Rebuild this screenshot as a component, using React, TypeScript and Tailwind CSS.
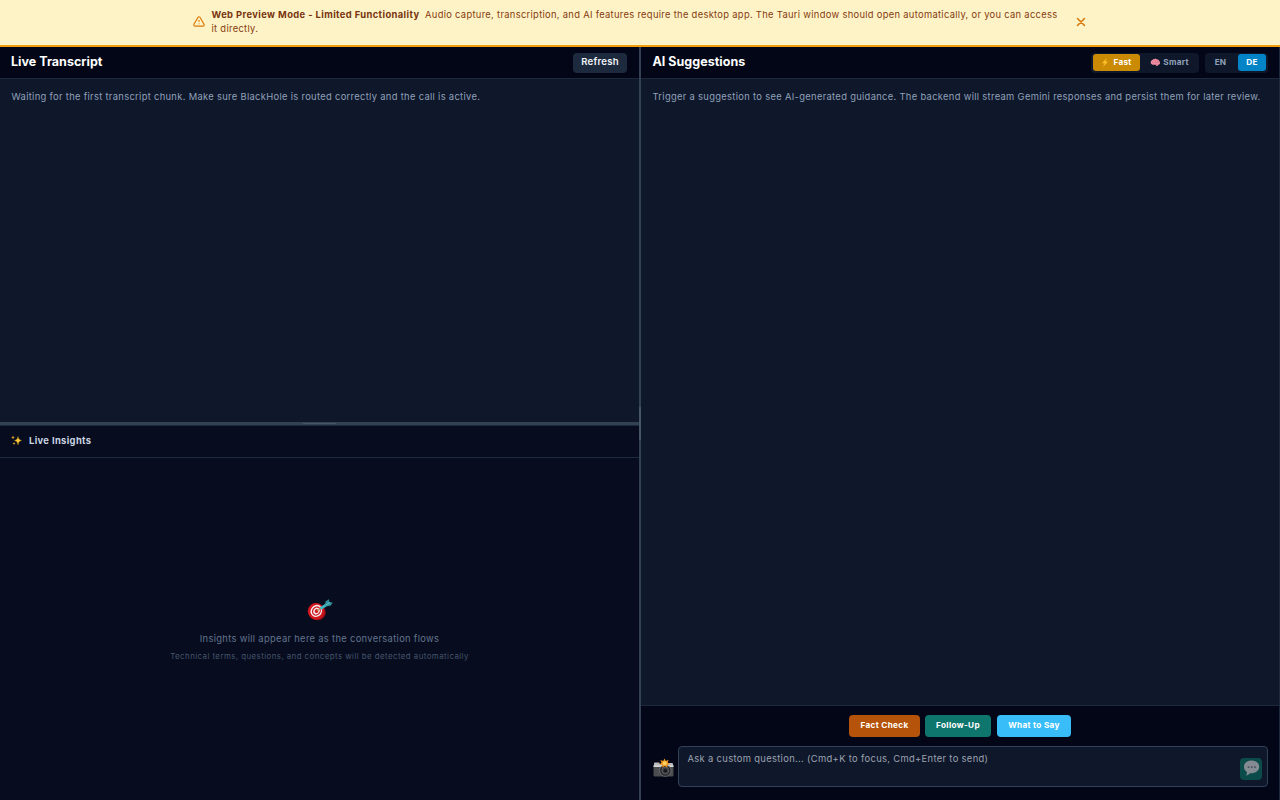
import type { ReactNode } from "react";

function Warning() {
  return (
    <svg className="-ml-px size-[14px] shrink-0 text-[#dc7b0a]" viewBox="0 0 24 24" fill="none" stroke="currentColor" strokeWidth="2" strokeLinecap="round" strokeLinejoin="round">
      <path d="M12 9v2m0 4h.01m-6.938 4h13.856c1.54 0 2.502-1.667 1.732-3L13.732 4c-.77-1.333-2.694-1.333-3.464 0L3.34 16c-.77 1.333.192 3 1.732 3z" />
    </svg>
  );
}

function Close() {
  return (
    <svg className="size-[14px]" viewBox="0 0 24 24" fill="none" stroke="currentColor" strokeWidth="2.6" strokeLinecap="round">
      <path d="M6 18L18 6M6 6l12 12" />
    </svg>
  );
}

function Sparkles() {
  return (
    <svg className="-mt-px h-[11px] w-[11px]" viewBox="0 0 22 22">
      <path d="M14 3Q14.8 10.2 21 11Q14.8 11.8 14 20Q13.2 11.8 7 11Q13.2 10.2 14 3Z" fill="#fcc934" stroke="#e8a51c" strokeWidth=".6" />
      <path d="M4 1Q4.4 4.6 8 5Q4.4 5.4 4 9Q3.6 5.4 0 5Q3.6 4.6 4 1ZM6 14Q6.4 16.7 9 17Q6.4 17.3 6 20Q5.6 17.3 3 17Q5.6 16.7 6 14Z" fill="#dfa02a" />
    </svg>
  );
}

function Bolt() {
  return (
    <svg className="h-[9px] w-[8px]" viewBox="0 0 16 18">
      <path d="M11 1L2 10.5L7.5 9.8L4.5 17L14 7.2L8.5 7.8Z" fill="#ffcf2e" stroke="#f6a623" strokeWidth=".8" />
    </svg>
  );
}

function Brain() {
  return (
    <svg className="h-[9px] w-[10.5px]" viewBox="0 0 22 18">
      <path d="M1.5 10C1 6 3 4 5.500 3C8 .8 12 .8 14 2C18 2.300 20 5 20.500 8C22 11 20 14 17 14L15.500 16.500C13 16 12.500 14 11 13.500C8 14.500 3 14 1.500 10Z" fill="#f090a4" />
      <path d="M4 9C6 7 8 8 9 10M8 4C10 4 11 6 13 5M12 10C14 7 17 7 18 10M11 12C13 12 14 14 16 13M15 5C16 4 17 5 17 7" fill="none" stroke="#c5526e" strokeWidth="1" />
    </svg>
  );
}

function Target() {
  return (
    <svg className="h-[22px] w-[26px]" viewBox="0 0 26 22">
      <ellipse cx="10.2" cy="13.3" rx="8.6" ry="8" fill="#9d1017" />
      <ellipse cx="9" cy="12.2" rx="8.2" ry="8.2" fill="#d5161f" />
      <g transform="rotate(35 9.4 12)">
        <ellipse cx="9.3" cy="12" rx="5.6" ry="6.3" fill="#f5eeee" />
        <ellipse cx="9.4" cy="12" rx="4.3" ry="4.9" fill="#d0202a" />
        <ellipse cx="9.5" cy="12" rx="3" ry="3.5" fill="#f5eeee" />
        <ellipse cx="9.6" cy="12" rx="1.8" ry="2.1" fill="#cf202a" />
      </g>
      <path d="M10 11.7L15 8.4" stroke="#b99a45" strokeWidth="1" />
      <path d="M13.5 9.6L20.5 5" stroke="#3db8c4" strokeWidth="2.8" />
      <path d="M18.2 6.6L18.4 2.4L22 .3L22.3 3L25.8 3.8L23.4 6.8L19.5 7.2Z" fill="#338f9c" />
      <path d="M19 5.8L23 3.6" stroke="#73d2d8" strokeWidth=".8" />
    </svg>
  );
}

function Camera() {
  return (
    <svg className="h-[20px] w-[21px]" viewBox="0 0 21 20">
      <path d="M1 5.3Q1 4.5 2 4.5H6L7 6H15L16 5H19Q20 5 20 6V10H1Z" fill="#b8babb" />
      <path d="M.5 8H20.5V17Q20.5 18.5 19 18.5H2Q.5 18.5 .5 17Z" fill="#4b4d4f" />
      <path d="M.5 7.2H20.5V9H.5Z" fill="#d3d4d5" />
      <circle cx="12.3" cy="12.6" r="5.7" fill="#242628" stroke="#8a8c8d" strokeWidth=".6" />
      <circle cx="12.3" cy="12.6" r="3.5" fill="#3a3d40" stroke="#77797b" strokeWidth=".6" />
      <circle cx="12.3" cy="12.8" r="1.7" fill="#16191b" />
      <path d="M11.5 .5L12.8 3L15.6 1.8L14.7 4.4L17 6L14.3 6.7L14.5 9.4L11.8 8L9.4 9.6L9.3 7L6.2 6.4L8.5 4.8L7.4 2L10.2 3.1Z" fill="#ef9320" />
      <circle cx="11.7" cy="5.2" r="2" fill="#ffd45c" />
    </svg>
  );
}

function Speech() {
  return (
    <svg className="-mt-px h-[17px] w-[17px]" viewBox="0 0 17 17">
      <path d="M8.5 .5C4 .5 1 3 1 6.800C1 9.100 2.100 10.900 4 12C4.100 13.500 3.400 14.800 2.600 15.500C4.500 15.500 6.200 14.500 7 13.300C12.500 13.500 16.200 10.800 16.200 6.800C16.200 3 13 .5 8.500 .5Z" fill="#858b93" />
      <path d="M4.700 6.300h1.600v1.600h-1.600ZM7.900 6.300h1.600v1.600h-1.600ZM11.100 6.300h1.600v1.600h-1.600Z" fill="#4a5260" />
    </svg>
  );
}

function Title({ children }: { children: ReactNode }) {
  return <h2 className="pb-[2px] text-[12.5px] leading-[18px] font-bold tracking-[0.02px] text-white">{children}</h2>;
}

export default function App() {
  return (
    <div className="flex h-screen flex-col overflow-hidden bg-[#020617] font-['Inter',sans-serif] whitespace-nowrap">
      <div className="flex h-[47px] shrink-0 justify-center border-b-2 border-[#f59e0b] bg-[#fef3c7] text-[#78350f]">
        <div className="flex w-[895px] items-center pb-[2px]">
          <Warning />
          <p className="ml-[6px] w-[850px] text-[9.4px] leading-[14px] tracking-[0.3px] text-[#853b0f]">
            <strong className="mr-[5.5px] font-bold tracking-[0.39px] text-[#78350f]">Web Preview Mode - Limited Functionality</strong>
            Audio capture, transcription, and AI features require the desktop app. The Tauri window should open automatically, or you can access
            <br />
            it directly.
          </p>
          <button className="ml-[12px] text-[#d97706]"><Close /></button>
        </div>
      </div>

      <main className="flex min-h-0 flex-1">
        <div className="flex w-[639px] flex-col">
          <header className="flex h-8 shrink-0 items-center justify-between border-b border-slate-800 pr-3 pl-[11px]">
            <Title>Live Transcript</Title>
            <button className="h-5 w-[54px] rounded-[4px] bg-slate-800 pb-px text-[9.6px] font-semibold tracking-[0.25px] text-slate-100">Refresh</button>
          </header>
          <section className="h-[343px] shrink-0 bg-slate-900 px-[11.5px] pt-[11px]">
            <p className="text-[9.4px] leading-[14px] tracking-[0.31px] text-slate-400">Waiting for the first transcript chunk. Make sure BlackHole is routed correctly and the call is active.</p>
          </section>
          <div className="flex h-[3px] shrink-0 items-center justify-center bg-[#334155]">
            <div className="h-px w-[33px] bg-[#475569]" />
          </div>
          <section className="flex min-h-0 flex-1 flex-col border-t border-slate-800 bg-[#070c1e]">
            <header className="flex h-8 shrink-0 items-center gap-[7px] border-b border-slate-800 pb-px pl-[11px]">
              <Sparkles />
              <h3 className="pt-px text-[9.4px] font-bold tracking-[0.36px] text-slate-300">Live Insights</h3>
            </header>
            <div className="flex flex-1 flex-col items-center justify-center pt-[2px]">
              <Target />
              <p className="mt-[11px] text-[9.4px] leading-[14px] tracking-[0.31px] text-slate-500">Insights will appear here as the conversation flows</p>
              <p className="mt-[4px] text-[7.9px] leading-[12px] tracking-[0.43px] text-slate-600">Technical terms, questions, and concepts will be detected automatically</p>
            </div>
          </section>
        </div>

        <div className="flex w-[2px] items-center bg-[#334155]">
          <div className="h-[33px] w-full bg-[#475569]" />
        </div>

        <div className="flex w-[639px] flex-col border-r border-slate-800">
          <header className="flex h-8 shrink-0 items-center justify-between border-b border-slate-800 pr-[11px] pl-[11.5px]">
            <Title>AI Suggestions</Title>
            <div className="flex gap-[6px] text-[8.2px] font-bold tracking-[0.25px] text-slate-400">
              <div className="flex h-5 w-[108px] rounded-[4px] bg-slate-900 p-[1.5px]">
                <button className="flex w-[47px] items-center justify-center gap-[4px] rounded-[3px] bg-[#ca8a04] pl-px text-white"><Bolt />Fast</button>
                <button className="flex flex-1 items-center justify-center gap-[2.5px] pl-[2px]"><Brain />Smart</button>
              </div>
              <div className="flex h-5 w-[63px] rounded-[4px] bg-slate-900 py-[1.5px] pr-[2px]">
                <button className="flex-1 pr-[2px]">EN</button>
                <button className="w-[28px] rounded-[3px] bg-[#0284c7] text-white">DE</button>
              </div>
            </div>
          </header>
          <section className="min-h-0 flex-1 bg-slate-900 px-[11.5px] pt-[11px]">
            <p className="text-[9.4px] leading-[14px] tracking-[0.31px] text-slate-400">Trigger a suggestion to see AI-generated guidance. The backend will stream Gemini responses and persist them for later review.</p>
          </section>
          <footer className="h-[95px] shrink-0 border-t border-slate-800 pt-[9px] pr-[11px] pl-[11px]">
            <div className="flex justify-center text-[8.2px] font-bold tracking-[0.32px] text-white">
              <button className="mr-[5px] h-[22px] w-[71px] rounded-[4px] bg-[#b45309] pb-px">Fact Check</button>
              <button className="mr-[6px] h-[22px] w-[66px] rounded-[4px] bg-[#0f766e] pb-px">Follow-Up</button>
              <button className="h-[22px] w-[74px] rounded-[4px] bg-[#38bdf8] pb-px">What to Say</button>
            </div>
            <div className="mt-[9px] flex">
              <div className="flex w-[26px] items-center pt-[3px] pl-[0.5px]"><Camera /></div>
              <div className="flex h-[41px] flex-1 justify-between rounded-[4px] border border-slate-700 bg-slate-900 pr-[5px] pl-[8.5px]">
                <span className="pt-[5px] text-[9.4px] leading-[14px] tracking-[0.33px] text-[#9ca3af]">Ask a custom question... (Cmd+K to focus, Cmd+Enter to send)</span>
                <button className="mt-[11px] flex size-[22px] items-center justify-center rounded-[4px] bg-[#0b4c4a]"><Speech /></button>
              </div>
            </div>
          </footer>
        </div>
      </main>
    </div>
  );
}
